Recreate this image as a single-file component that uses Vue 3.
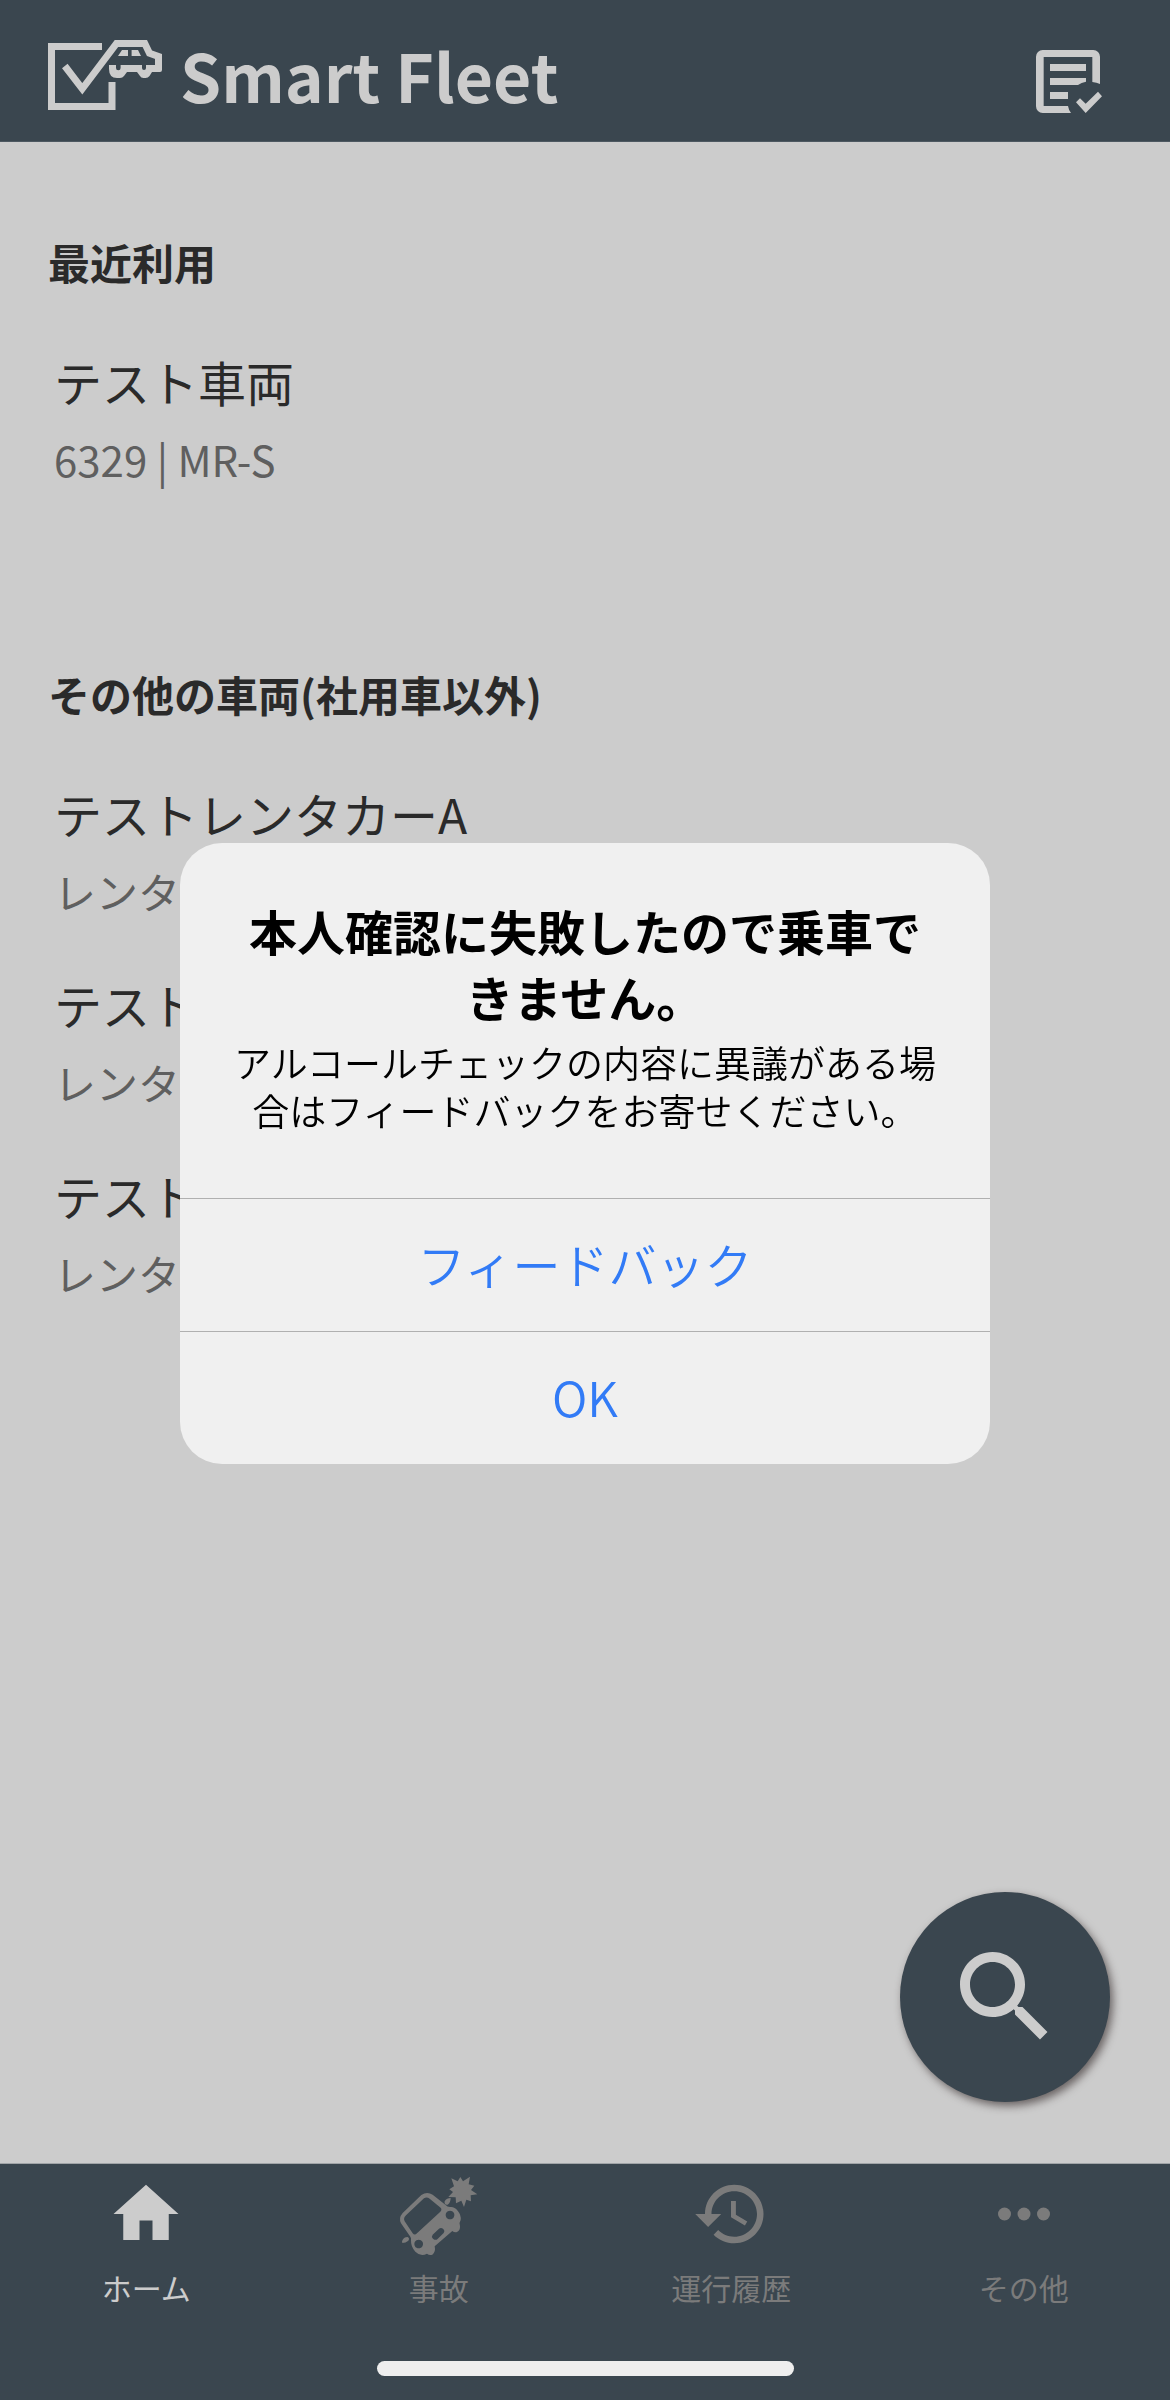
<script setup>
const sections = [
  {
    title: '最近利用',
    vehicles: [{ name: 'テスト車両', detail: '6329 | MR-S' }],
  },
  {
    title: 'その他の車両(社用車以外)',
    vehicles: [
      { name: 'テストレンタカーA', detail: 'レンタカー' },
      { name: 'テストレンタカーB', detail: 'レンタカー' },
      { name: 'テストレンタカーC', detail: 'レンタカー' },
    ],
  },
]

const tabs = [
  { id: 'home', label: 'ホーム' },
  { id: 'accident', label: '事故' },
  { id: 'history', label: '運行履歴' },
  { id: 'other', label: 'その他' },
]
const activeTab = 'home'
</script>

<template>
  <div class="app">
    <header class="header">
      <div class="brand">
        <svg class="brand-mark" viewBox="48 40 116 74" aria-hidden="true">
          <g fill="none" stroke="currentColor" stroke-width="7">
            <path d="M102 46.5H51.5V106.5H112V82" />
            <path d="M64.8 66L82.3 88.8L116.5 43.5H144.8L149.5 53.3L158.5 56.5V69" stroke-linejoin="miter" />
          </g>
          <g fill="currentColor">
            <path d="M109 65H116V68a2.3 2.3 0 0 0 4.6 0V65H142V68a2 2 0 0 0 4 0V65H162V70q0 2-2 2H152l-2.5 4q-1.500 2-4 2h-2q-2.500 0-3.500-2L137 72H127l-3 4q-1.500 2-4 2h-3q-8 0-8-9z" />
            <path d="M118 56l4-6h6v6zM131.600 50H138l3 6h-9.400z" />
          </g>
        </svg>
        <span class="brand-name">Smart Fleet</span>
      </div>
      <button class="icon-button" type="button" aria-label="チェック一覧">
        <svg viewBox="78 45 252 252" width="84" height="84" aria-hidden="true">
          <g fill="currentColor">
            <path d="M128 90H280a20 20 0 0 1 20 20V192Q290 187 277 186V111H131V258H204Q206 270 213 279H128a20 20 0 0 1-20-20V110a20 20 0 0 1 20-20z" />
            <path d="M150 132H258V153H150zM150 174H258V185Q244 187 234 195H150zM150 216H204V237H150z" />
            <path d="M228 247L240 235L257 251L294 215L306 229L257 279z" />
          </g>
        </svg>
      </button>
    </header>

    <main class="content">
      <section v-for="section in sections" :key="section.title" class="section">
        <h2 class="section-title">{{ section.title }}</h2>
        <ul class="vehicles">
          <li v-for="vehicle in section.vehicles" :key="vehicle.name" class="vehicle">
            <span class="vehicle-name">{{ vehicle.name }}</span>
            <span class="vehicle-detail">{{ vehicle.detail }}</span>
          </li>
        </ul>
      </section>
    </main>

    <footer class="footer">
      <button class="fab" type="button" aria-label="検索">
        <svg viewBox="0 0 24 24" width="120" height="120" fill="currentColor" aria-hidden="true">
          <path d="M15.500 14h-.79l-.28-.27C15.410 12.590 16 11.110 16 9.500 16 5.910 13.090 3 9.500 3S3 5.910 3 9.500 5.910 16 9.500 16c1.610 0 3.090-.59 4.230-1.570l.27.28v.79l5 4.990L20.490 19l-4.990-5zm-6 0C7.010 14 5 11.990 5 9.500S7.010 5 9.500 5 14 7.010 14 9.500 11.990 14 9.500 14z" />
        </svg>
      </button>
      <nav class="tabs">
        <a
          v-for="tab in tabs"
          :key="tab.id"
          :href="'#' + tab.id"
          class="tab"
          :class="{ active: tab.id === activeTab }"
        >
          <svg v-if="tab.id === 'home'" class="tab-icon" viewBox="0 0 24 24" aria-hidden="true">
            <path d="M10 20v-6h4v6h5v-8h3L12 3 2 12h3v8z" />
          </svg>
          <svg v-else-if="tab.id === 'accident'" class="tab-icon" viewBox="1020 105 234 234" aria-hidden="true">
            <path
              fill-rule="evenodd"
              d="M1084 165Q1101 153 1118 164L1156 194Q1162 201 1170 201Q1183 199 1193 212Q1204 225 1202 240Q1196 249 1200 258Q1201 271 1191 276Q1183 278 1177 273L1124 319Q1128 336 1117 344Q1108 347 1101 341Q1082 351 1066 335Q1052 320 1053 300Q1054 294 1051 290L1023 250Q1015 234 1028 219ZM1092 175L1038 226Q1029 234 1034 244L1058 280Q1064 287 1071 280L1141 215Q1148 208 1140 202L1109 176Q1100 170 1092 175ZM1170 212a13 13 0 1 0 .1 0ZM1076 299a13 13 0 1 0 .1 0ZM1118 284L1137 266Q1143 261 1150 267Q1156 273 1151 279L1132 298Q1126 302 1119 296Q1113 290 1118 284Z"
            />
            <path d="M1154 184Q1160 174 1172 174Q1172 188 1163 194Q1152 196 1154 184ZM1026 304Q1030 291 1043 291Q1050 295 1045 302Q1037 309 1027 309Z" />
            <path d="M1174 115L1193 124L1201 111L1209 124L1230 110L1226 133L1243 137L1233 150L1252 163L1232 166L1233 184L1219 179L1212 201L1204 182L1188 190L1187 172L1165 171L1179 156L1168 148L1182 139Z" />
          </svg>
          <svg v-else-if="tab.id === 'history'" class="tab-icon" viewBox="0 0 24 24" aria-hidden="true">
            <path d="M13 3c-4.970 0-9 4.030-9 9H1l3.890 3.890.07.14L9 12H6c0-3.870 3.130-7 7-7s7 3.130 7 7-3.130 7-7 7c-1.930 0-3.680-.79-4.940-2.060l-1.420 1.420C8.270 19.990 10.510 21 13 21c4.970 0 9-4.030 9-9s-4.030-9-9-9zm-1 5v5l4.280 2.540.72-1.210-3.500-2.080V8H12z" />
          </svg>
          <svg v-else class="tab-icon" viewBox="0 0 24 24" aria-hidden="true">
            <circle cx="6" cy="12" r="2" />
            <circle cx="12" cy="12" r="2" />
            <circle cx="18" cy="12" r="2" />
          </svg>
          <span class="tab-label">{{ tab.label }}</span>
        </a>
      </nav>
      <div class="home-indicator"></div>
    </footer>

    <div class="overlay">
      <div class="alert" role="alertdialog" aria-modal="true" aria-labelledby="alert-title" aria-describedby="alert-message">
        <div class="alert-body">
          <h1 id="alert-title" class="alert-title">本人確認に失敗したので乗車できません。</h1>
          <p id="alert-message" class="alert-message">アルコールチェックの内容に異議がある場合はフィードバックをお寄せください。</p>
        </div>
        <button class="alert-action" type="button">フィードバック</button>
        <button class="alert-action" type="button">OK</button>
      </div>
    </div>
  </div>
</template>

<style>
body {
  margin: 0;
  background: #cccccc;
}
</style>

<style scoped>
.app {
  display: flex;
  flex-direction: column;
  min-height: 100vh;
  font-family: "Noto Sans CJK JP", sans-serif;
  color: #2a2a2a;
  background: #cccccc;
}

button {
  margin: 0;
  padding: 0;
  border: 0;
  background: none;
  font: inherit;
  color: inherit;
  cursor: pointer;
}

svg {
  display: block;
}

.header {
  display: flex;
  align-items: center;
  justify-content: space-between;
  box-sizing: border-box;
  height: 142px;
  padding: 12px 60px 0 48px;
  border-bottom: 1px solid #4d5861;
  background: #3a464f;
  color: #cccccc;
}

.brand {
  display: flex;
  align-items: center;
  gap: 16px;
}

.brand-mark {
  width: 116px;
  height: 74px;
}

.brand-name {
  padding-bottom: 6px;
  font-size: 66px;
  font-weight: 700;
  line-height: 84px;
}

.content {
  flex: 1;
  padding: 90px 48px 0;
}

.section + .section {
  margin-top: 169px;
}

.section-title {
  margin: 0 0 53px;
  font-size: 42px;
  font-weight: 700;
  line-height: 60px;
}

.vehicles {
  display: flex;
  flex-direction: column;
  gap: 41px;
  margin: 0;
  padding: 0 6px;
  list-style: none;
}

.vehicle {
  display: flex;
  flex-direction: column;
  gap: 6px;
  line-height: 72px;
}

.vehicle-name {
  font-size: 48px;
}

.vehicle-detail {
  font-size: 42px;
  color: #5f5f5f;
}

.footer {
  position: sticky;
  bottom: 0;
  background: #3a464f;
  border-top: 1px solid #a0a4a7;
}

.fab {
  position: absolute;
  right: 60px;
  bottom: calc(100% + 62px);
  display: flex;
  align-items: center;
  justify-content: center;
  width: 210px;
  height: 210px;
  border-radius: 50%;
  background: #3a464f;
  color: #cccccc;
  box-shadow: 3px 4px 8px rgba(40, 30, 30, 0.6);
}

.tabs {
  display: flex;
  padding-top: 11px;
}

.tab {
  flex: 1;
  display: flex;
  flex-direction: column;
  align-items: center;
  gap: 12px;
  color: #7b7b7b;
  text-decoration: none;
}

.tab.active {
  color: #cccccc;
}

.tab-icon {
  width: 78px;
  height: 78px;
  fill: currentColor;
  overflow: visible;
}

.tab-label {
  font-size: 30px;
  line-height: 44px;
}

.home-indicator {
  width: 417px;
  height: 15px;
  margin: 52px auto 24px;
  border-radius: 8px;
  background: #eeeeee;
}

.overlay {
  position: fixed;
  inset: 0;
  display: flex;
  align-items: center;
  justify-content: center;
  padding: 0 48px 93px;
}

.alert {
  width: 810px;
  overflow: hidden;
  border-radius: 42px;
  background: #f0f0f0;
  color: #000000;
}

.alert-body {
  padding: 54px 48px 64px;
  text-align: center;
}

.alert-title {
  margin: 0;
  font-size: 48px;
  font-weight: 700;
  line-height: 66px;
}

.alert-message {
  margin: 9px 0 0;
  font-size: 37px;
  font-weight: 350;
  line-height: 48px;
}

.alert-action {
  display: block;
  width: 100%;
  height: 133px;
  padding-bottom: 4px;
  border-top: 1px solid #b0b0b0;
  font-size: 48px;
  font-weight: 350;
  color: #327bf6;
}
</style>
